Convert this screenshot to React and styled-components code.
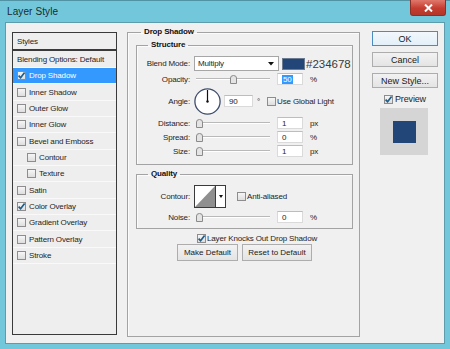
import styled, { createGlobalStyle } from "styled-components";

const GlobalStyle = createGlobalStyle`
  body {
    margin: 0;
    background: #ffffff;
    font-family: "Liberation Sans", Arial, sans-serif;
  }
`;

const Window = styled.div`
  width: 450px;
  height: 349px;
  box-sizing: border-box;
  background: #72c8da;
  border-top: 1px solid #4f93a4;
  padding: 0 5px 5px;
  display: flex;
  flex-direction: column;
`;

const TitleBar = styled.div`
  height: 21px;
  display: flex;
  align-items: flex-start;
`;

const Title = styled.div`
  margin: 5px 0 0 2px;
  font-size: 10px;
  color: #1c2a30;
  letter-spacing: 0.1px;
`;

const CloseButton = styled.div`
  margin: -1px -1px 0 auto;
  width: 34px;
  height: 15px;
  background: linear-gradient(#e0786c, #c43d2f 55%, #b3352a);
  border: 1px solid #8e2e25;
  border-top: none;
  border-radius: 0 0 3px 3px;
  display: flex;
  align-items: center;
  justify-content: center;
`;

const Client = styled.div`
  flex: 1;
  background: #f0f0f0;
  border: 1px solid #5d9cac;
  padding: 4px 6px 0;
  display: flex;
  align-items: flex-start;
  font-size: 8px;
  letter-spacing: -0.15px;
  color: #1e1e1e;
`;

/* ---------- styles list ---------- */

const StylesList = styled.div`
  margin-top: 5px;
  width: 105px;
  height: 303px;
  box-sizing: border-box;
  border: 1px solid #3a3a3a;
  background: #eeeeee;
`;

const ListHeader = styled.div`
  height: 16px;
  padding-left: 4px;
  display: flex;
  align-items: center;
  border-bottom: 2px solid #3a3a3a;
`;

const ListItem = styled.div`
  height: ${(p) => (p.$first ? "16px" : "15.35px")};
  display: flex;
  align-items: center;
  gap: 3px;
  padding-left: ${(p) => (p.$indent ? "14px" : "4px")};
  border-bottom: 1px solid #f9f9f9;
  background: ${(p) => (p.$active ? "#3399ff" : "transparent")};
  color: ${(p) => (p.$active ? "#ffffff" : "#1e1e1e")};
`;

/* ---------- checkbox ---------- */

const Box = styled.span`
  flex: none;
  width: 9px;
  height: 9px;
  box-sizing: border-box;
  border: 1px solid #8d8d8d;
  background: linear-gradient(#f6f6f6, #dedede);
  display: inline-flex;
  align-items: center;
  justify-content: center;
`;

function Check({ checked }) {
  return (
    <Box>
      {checked && (
        <svg width="9" height="9" viewBox="0 0 9 9" style={{ margin: "-1px" }}>
          <path
            d="M1.6 4.6 L3.6 6.8 L7.6 1.6"
            fill="none"
            stroke="#1d5d8c"
            strokeWidth="1.7"
          />
        </svg>
      )}
    </Box>
  );
}

/* ---------- fieldsets ---------- */

const Group = styled.fieldset`
  margin: ${(p) => p.$margin || "0"};
  padding: ${(p) => p.$padding || "0"};
  border: 1px solid #a3a3a3;
  box-shadow: inset 1px 1px 0 #fbfbfb;
  min-width: 0;
`;

const Legend = styled.legend`
  margin-left: ${(p) => p.$offset || "11px"};
  padding: 0 3px;
  font-weight: bold;
  line-height: 10px;
  color: #111;
`;

const MainPanel = styled(Group)`
  margin-left: 10px;
  width: 233px;
  height: 310px;
  box-sizing: border-box;
`;

const Rows = styled.div`
  display: flex;
  flex-direction: column;
  gap: ${(p) => p.$gap || "2px"};
`;

const Row = styled.div`
  display: flex;
  align-items: center;
  height: ${(p) => p.$h || "12px"};
`;

const Label = styled.div`
  width: 53px;
  text-align: right;
  margin-right: 4px;
  flex: none;
`;

const Select = styled.div`
  width: 85px;
  height: 15px;
  box-sizing: border-box;
  background: #ffffff;
  border: 1px solid #a6a6a6;
  display: flex;
  align-items: center;
  justify-content: space-between;
  padding: 0 4px 0 3px;
`;

const Swatch = styled.div`
  margin-left: 3px;
  width: 23px;
  height: 12px;
  box-sizing: border-box;
  border: 1px solid #6b7c92;
  background: ${(p) => p.$color};
`;

const HexText = styled.div`
  margin-left: 1px;
  font-size: 11.5px;
  letter-spacing: 0;
  color: #3a3a3a;
`;

const SliderTrack = styled.div`
  position: relative;
  margin-left: 2px;
  width: 74px;
  height: 12px;
  &::before {
    content: "";
    position: absolute;
    left: 0;
    right: 0;
    top: 5px;
    height: 1px;
    background: #b9b9b9;
    box-shadow: 0 1px 0 #ffffff;
  }
`;

const Thumb = styled.svg`
  position: absolute;
  top: 2px;
`;

function Slider({ value }) {
  return (
    <SliderTrack>
      <Thumb width="7" height="9" viewBox="0 0 7 9" style={{ left: `${(value / 100) * 67}px` }}>
        <path
          d="M0.5 8.5 V3 Q0.5 0.5 3.5 0.5 Q6.5 0.5 6.5 3 V8.5 Z"
          fill="#e4e4e4"
          stroke="#8a8a8a"
        />
      </Thumb>
    </SliderTrack>
  );
}

const Input = styled.div`
  margin-left: ${(p) => p.$ml || "7px"};
  width: ${(p) => p.$w || "26px"};
  height: 12px;
  box-sizing: border-box;
  background: #ffffff;
  border: 1px solid #dadada;
  border-top-color: #bdbdbd;
  display: flex;
  align-items: center;
  padding-left: 4px;
`;

const Selected = styled.span`
  background: #3399ff;
  color: #ffffff;
  padding: 0 1px;
  line-height: 9px;
`;

const Unit = styled.div`
  margin-left: ${(p) => p.$ml || "7px"};
`;

const CheckLabel = styled.label`
  display: flex;
  align-items: center;
  gap: ${(p) => p.$gap || "1px"};
  margin-left: ${(p) => p.$ml || "0"};
  margin-top: ${(p) => p.$mt || "0"};
  height: ${(p) => p.$h || "10px"};
  font-size: ${(p) => p.$size || "8px"};
`;

const ContourPicker = styled.div`
  display: flex;
  height: 23px;
  box-sizing: border-box;
  border: 1px solid #3a3a3a;
  background: #ffffff;
`;

const ContourArrow = styled.div`
  width: 9px;
  border-left: 1px solid #3a3a3a;
  display: flex;
  align-items: center;
  justify-content: center;
`;

const CenterBlock = styled.div`
  display: flex;
  flex-direction: column;
`;

const ButtonRow = styled.div`
  display: flex;
  gap: 4px;
  margin: 1px 0 0 49px;
`;

const PushButton = styled.div`
  width: ${(p) => p.$w};
  height: ${(p) => p.$h || "17px"};
  box-sizing: border-box;
  border: 1px solid ${(p) => (p.$focus ? "#4a8bc2" : "#adadad")};
  background: ${(p) =>
    p.$focus
      ? "linear-gradient(#f2f8fc, #e3eff8)"
      : "linear-gradient(#f2f2f2, #e4e4e4)"};
  display: flex;
  align-items: center;
  justify-content: center;
  font-size: ${(p) => p.$size || "8px"};
  letter-spacing: 0;
  color: #1a1a1a;
`;

/* ---------- right column ---------- */

const Side = styled.div`
  margin: 4px 0 0 12px;
  width: 66px;
  display: flex;
  flex-direction: column;
  gap: 6px;
`;

const PreviewBox = styled.div`
  margin: 4px 0 0 8px;
  width: 48px;
  height: 47px;
  background: #d5d5d5;
  display: flex;
  align-items: center;
  justify-content: center;
`;

const PreviewSquare = styled.div`
  width: 23px;
  height: 22px;
  background: #234678;
`;

const styleItems = [
  { name: "Drop Shadow", checked: true, active: true },
  { name: "Inner Shadow" },
  { name: "Outer Glow" },
  { name: "Inner Glow" },
  { name: "Bevel and Emboss" },
  { name: "Contour", indent: true },
  { name: "Texture", indent: true },
  { name: "Satin" },
  { name: "Color Overlay", checked: true },
  { name: "Gradient Overlay" },
  { name: "Pattern Overlay" },
  { name: "Stroke" },
];

function DropArrow() {
  return (
    <svg width="6" height="4" viewBox="0 0 6 4">
      <path d="M0 0 H6 L3 3.5 Z" fill="#111" />
    </svg>
  );
}

export default function App() {
  return (
    <>
      <GlobalStyle />
      <Window>
        <TitleBar>
          <Title>Layer Style</Title>
          <CloseButton>
            <svg width="9" height="8" viewBox="0 0 9 8">
              <path d="M1 0.5 L8 7.5 M8 0.5 L1 7.5" stroke="#ffffff" strokeWidth="2" />
            </svg>
          </CloseButton>
        </TitleBar>
        <Client>
          <StylesList>
            <ListHeader>Styles</ListHeader>
            <ListItem $first>Blending Options: Default</ListItem>
            {styleItems.map((it) => (
              <ListItem key={it.name} $active={it.active} $indent={it.indent}>
                <Check checked={it.checked} />
                {it.name}
              </ListItem>
            ))}
          </StylesList>

          <MainPanel as="fieldset">
            <Legend $offset="13px">Drop Shadow</Legend>
            <Group $margin="3px 6px 0 8px" $padding="6px 0 7px">
              <Legend>Structure</Legend>
              <Rows>
                <Row $h="15px">
                  <Label>Blend Mode:</Label>
                  <Select>
                    Multiply
                    <DropArrow />
                  </Select>
                  <Swatch $color="#234678" />
                  <HexText>#234678</HexText>
                </Row>
                <Row>
                  <Label>Opacity:</Label>
                  <Slider value={50} />
                  <Input>
                    <Selected>50</Selected>
                  </Input>
                  <Unit>%</Unit>
                </Row>
                <Row $h="28px">
                  <Label>Angle:</Label>
                  <svg width="27" height="27" viewBox="0 0 27 27">
                    <circle cx="13.5" cy="13.5" r="12.6" fill="#ffffff" stroke="#3f4d6b" strokeWidth="1.3" />
                    <path d="M13.5 13.5 V2" stroke="#111" strokeWidth="1.2" />
                    <circle cx="13.5" cy="13.5" r="1.2" fill="#111" />
                  </svg>
                  <Input $ml="3px" $w="29px">90</Input>
                  <Unit $ml="4px">°</Unit>
                  <CheckLabel $ml="7px">
                    <Check />
                    Use Global Light
                  </CheckLabel>
                </Row>
                <Row>
                  <Label>Distance:</Label>
                  <Slider value={0} />
                  <Input>1</Input>
                  <Unit>px</Unit>
                </Row>
                <Row>
                  <Label>Spread:</Label>
                  <Slider value={0} />
                  <Input>0</Input>
                  <Unit>%</Unit>
                </Row>
                <Row>
                  <Label>Size:</Label>
                  <Slider value={0} />
                  <Input>1</Input>
                  <Unit>px</Unit>
                </Row>
              </Rows>
            </Group>

            <Group $margin="4px 6px 0 8px" $padding="6px 0 5px">
              <Legend>Quality</Legend>
              <Rows $gap="3px">
                <Row $h="23px">
                  <Label>Contour:</Label>
                  <ContourPicker>
                    <svg width="20" height="21" viewBox="0 0 20 21">
                      <rect width="20" height="21" fill="#ffffff" />
                      <path d="M0 21 L20 0 V21 Z" fill="#8f8f8f" />
                    </svg>
                    <ContourArrow>
                      <svg width="4" height="3" viewBox="0 0 4 3">
                        <path d="M0 0 H4 L2 3 Z" fill="#111" />
                      </svg>
                    </ContourArrow>
                  </ContourPicker>
                  <CheckLabel $ml="11px">
                    <Check />
                    Anti-aliased
                  </CheckLabel>
                </Row>
                <Row>
                  <Label>Noise:</Label>
                  <Slider value={0} />
                  <Input>0</Input>
                  <Unit>%</Unit>
                </Row>
              </Rows>
            </Group>

            <CenterBlock>
              <CheckLabel $ml="69px" $mt="4px">
                <Check checked />
                Layer Knocks Out Drop Shadow
              </CheckLabel>
              <ButtonRow>
                <PushButton $w="61px">Make Default</PushButton>
                <PushButton $w="70px">Reset to Default</PushButton>
              </ButtonRow>
            </CenterBlock>
          </MainPanel>

          <Side>
            <PushButton $w="66px" $h="15px" $size="9px" $focus>
              OK
            </PushButton>
            <PushButton $w="66px" $h="15px" $size="9px">
              Cancel
            </PushButton>
            <PushButton $w="66px" $h="15px" $size="9px">
              New Style...
            </PushButton>
            <div>
              <CheckLabel $ml="12px" $gap="2px" $size="9px">
                <Check checked />
                Preview
              </CheckLabel>
              <PreviewBox>
                <PreviewSquare />
              </PreviewBox>
            </div>
          </Side>
        </Client>
      </Window>
    </>
  );
}
